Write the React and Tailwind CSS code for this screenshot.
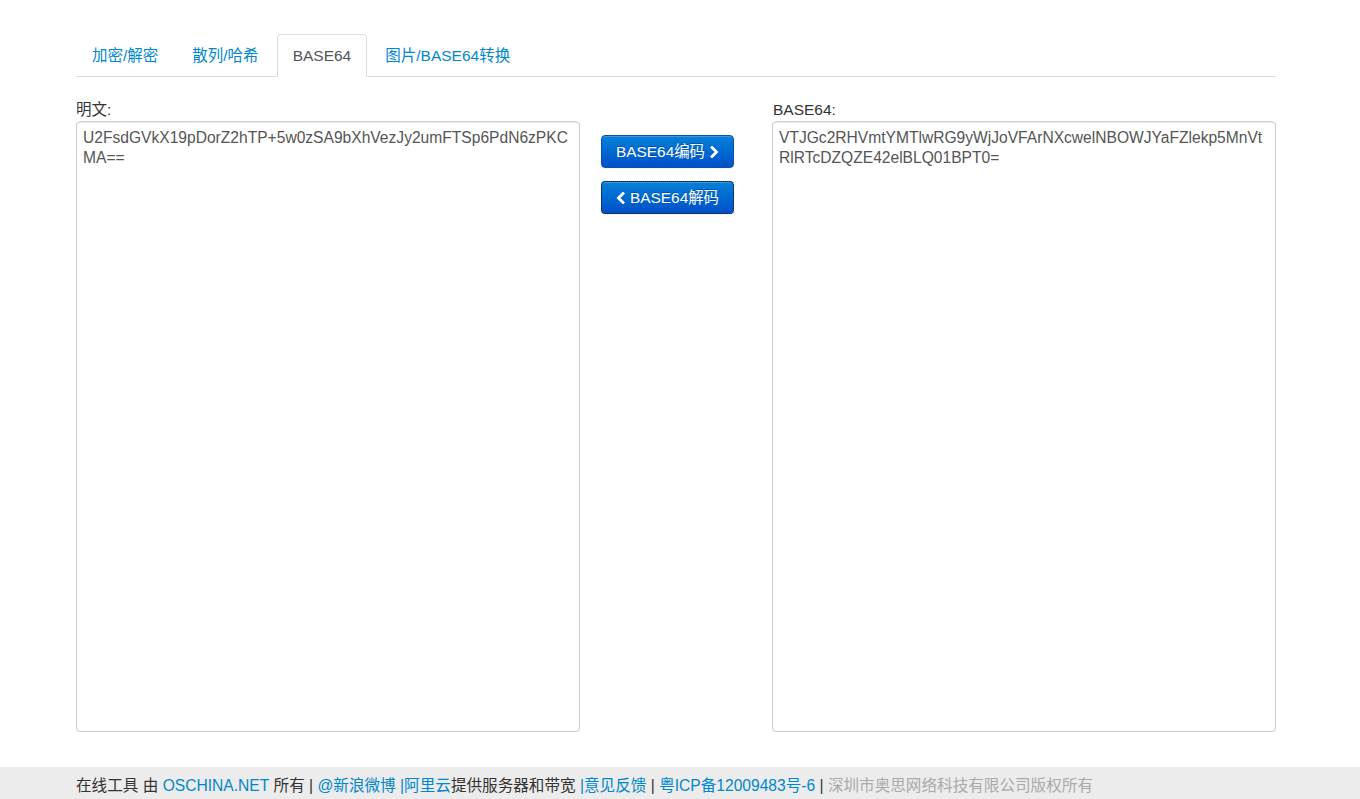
import React from "react";

const font = { fontFamily: '"Liberation Sans", Arial, "Noto Sans CJK SC", sans-serif' };

function Chevron({ dir }) {
  return (
    <svg width="10" height="12" viewBox="0 0 10 12" className="inline-block">
      {dir === "right" ? (
        <path d="M3 1.5 L7.5 6 L3 10.5" fill="none" stroke="white" strokeWidth="2.8" strokeLinecap="square" strokeLinejoin="miter" />
      ) : (
        <path d="M7 1.5 L2.5 6 L7 10.5" fill="none" stroke="white" strokeWidth="2.8" strokeLinecap="square" strokeLinejoin="miter" />
      )}
    </svg>
  );
}

export default function App() {
  const tabs = ["加密/解密", "散列/哈希", "BASE64", "图片/BASE64转换"];
  const plain = "U2FsdGVkX19pDorZ2hTP+5w0zSA9bXhVezJy2umFTSp6PdN6zPKCMA==";
  const b64 = "VTJGc2RHVmtYMTlwRG9yWjJoVFArNXcwelNBOWJYaFZlekp5MnVtRlRTcDZQZE42elBLQ01BPT0=";
  const btn =
    "flex h-[33px] w-[133px] items-center justify-center gap-[4px] rounded-[4px] border border-[#0a4fa8] bg-gradient-to-b from-[#0a80d8] to-[#0050c8] text-[15.4px] text-white [text-shadow:0_-1px_0_rgba(0,0,0,0.25)] shadow-[inset_0_1px_0_rgba(255,255,255,0.2),0_1px_2px_rgba(0,0,0,0.05)]";
  const ta =
    "h-[611px] w-[504px] resize-none rounded-[4px] border border-[#ccc] px-[6px] pt-[6px] pb-[6px] text-[15.6px] leading-[20px] text-[#555] shadow-[inset_0_1px_1px_rgba(0,0,0,0.075)] outline-none break-all";
  return (
    <div style={font} className="h-[799px] overflow-hidden flex flex-col bg-white text-[#333]">
      <div className="w-[1200px] ml-[76px] pt-[34px] flex-1">
        <ul className="flex border-b border-[#ddd] h-[43px]">
          {tabs.map((t, i) => (
            <li key={t} className="mr-[2px] -mb-px">
              <div
                className={
                  "h-[43px] px-[15px] flex items-center text-[15.5px] rounded-t-[4px] border " +
                  (i === 2
                    ? "border-[#ddd] border-b-white bg-white text-[#555]"
                    : "border-transparent text-[#0088cc]")
                }
              >
                {t}
              </div>
            </li>
          ))}
        </ul>
        <div className="flex mt-[22px]">
          <div className="w-[504px] flex flex-col">
            <label className="h-[22px] text-[15.5px] leading-[22px] text-[#333]">明文:</label>
            <textarea readOnly value={plain} className={ta} />
          </div>
          <div className="w-[192px] pl-[21px] pt-[36px] flex flex-col gap-[13px]">
            <button className={btn}>
              <span>BASE64编码</span>
              <Chevron dir="right" />
            </button>
            <button className={btn + " outline-1 outline-dotted outline-[#1a1a2a] -outline-offset-1"}>
              <Chevron dir="left" />
              <span>BASE64解码</span>
            </button>
          </div>
          <div className="w-[504px] flex flex-col">
            <label className="h-[22px] pl-[1px] text-[15.5px] leading-[22px] text-[#333]">BASE64:</label>
            <textarea readOnly value={b64} className={ta} />
          </div>
        </div>
      </div>
      <footer className="h-[32px] shrink-0 bg-[#ececec] flex items-center pt-[5px] pl-[76px] text-[15.6px] text-[#333] whitespace-pre">
        <span>在线工具 由 </span>
        <span className="text-[#0088cc]">OSCHINA.NET</span>
        <span> 所有 | </span>
        <span className="text-[#0088cc]">@新浪微博</span>
        <span> </span>
        <span className="text-[#0088cc]">|阿里云</span>
        <span>提供服务器和带宽 </span>
        <span className="text-[#0088cc]">|意见反馈</span>
        <span> | </span>
        <span className="text-[#0088cc]">粤ICP备12009483号-6</span>
        <span> | </span>
        <span className="text-[#aaa]">深圳市奥思网络科技有限公司版权所有</span>
      </footer>
    </div>
  );
}
